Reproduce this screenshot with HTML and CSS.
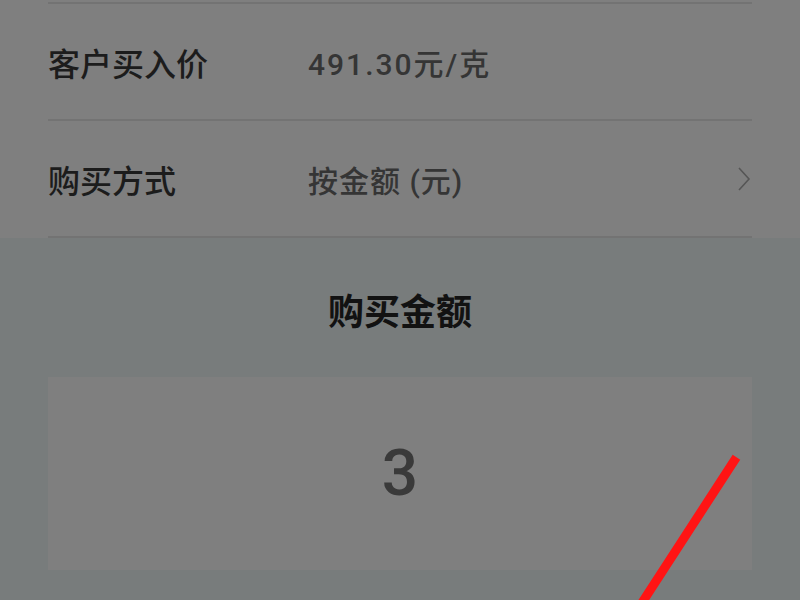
FILE: index.html
```html
<!DOCTYPE html>
<html lang="zh-CN">
<head>
  <meta charset="UTF-8">
  <meta name="viewport" content="width=device-width, initial-scale=1.0">
  <title>购买黄金</title>
  <link rel="stylesheet" href="styles.css">
</head>
<body>
  <div class="page">
    <!-- 订单信息 -->
    <div class="info-list">
      <div class="info-row">
        <span class="info-label">客户买入价</span>
        <span class="info-value">491.30元/克</span>
      </div>
      <div class="info-row">
        <span class="info-label">购买方式</span>
        <span class="info-value tight">按金额 (元)</span>
        <svg class="chevron" width="14" height="24" viewBox="0 0 14 24">
          <path d="M2 1 L12 12 L2 23" fill="none" stroke="#565656" stroke-width="1.6"/>
        </svg>
      </div>
    </div>

    <!-- 金额输入 -->
    <div class="amount-panel">
      <h2 class="amount-title">购买金额</h2>
      <div class="amount-box">
        <span class="amount-value">3</span>
      </div>
    </div>

    <!-- 标注线 -->
    <svg class="mark" width="800" height="600" viewBox="0 0 800 600">
      <line x1="734" y1="461" x2="636" y2="612" stroke="#ff1414" stroke-width="9" stroke-linecap="square"/>
    </svg>
  </div>
</body>
</html>
```

FILE: styles.css
```css
body {
  margin: 0;
  font-family: Roboto, "Noto Sans CJK SC", sans-serif;
  background-color: #787c7c;
}

.page {
  position: relative;
  width: 800px;
  height: 600px;
  overflow: hidden;
}

.info-list {
  background-color: #7f7f7f;
  padding: 0 48px;
  padding-top: 2px;
}
.info-row {
  display: flex;
  align-items: center;
  height: 115px;
  border-top: 2px solid #737373;
}
.info-row:last-child {
  border-bottom: 2px solid #737373;
}
.info-label {
  width: 260px;
  font-size: 32px;
  font-weight: 500;
  color: #1c1c1c;
}
.info-value {
  flex: 1;
  font-size: 30px;
  font-weight: 500;
  letter-spacing: 2px;
  color: #353535;
}
.info-value.tight {
  letter-spacing: 1px;
}
.chevron {
  margin-right: 1px;
}

.amount-panel {
  padding: 55px 48px 0;
}
.amount-title {
  margin: 0;
  text-align: center;
  font-size: 36px;
  line-height: 40px;
  font-weight: bold;
  color: #121212;
}
.amount-box {
  margin-top: 44px;
  height: 193px;
  background-color: #7f7f7f;
  display: flex;
  justify-content: center;
  align-items: center;
}
.amount-value {
  font-size: 64px;
  line-height: 1;
  font-weight: 500;
  color: #3a3a3a;
}

.mark {
  position: absolute;
  left: 0;
  top: 0;
}
```
